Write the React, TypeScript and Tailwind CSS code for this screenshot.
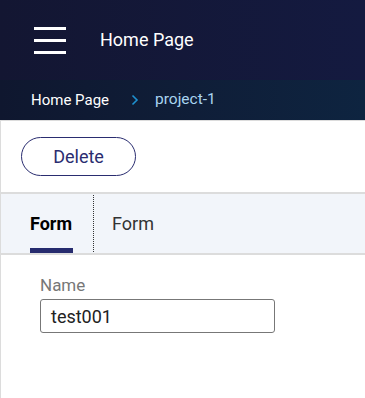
import React from "react";

export default function App() {
  return (
    <div className="w-[365px] h-[398px] overflow-hidden bg-white" style={{ fontFamily: "Roboto, 'Open Sans', Arial, sans-serif" }}>
      <header className="h-[80px] flex items-center bg-gradient-to-r from-[#131632] to-[#141a40]">
        <div className="ml-[34px] w-[32px] flex flex-col gap-[9px]">
          <span className="block h-[3px] bg-white" />
          <span className="block h-[3px] bg-white" />
          <span className="block h-[3px] bg-white" />
        </div>
        <span className="ml-[34px] text-white text-[18px] leading-none">Home Page</span>
      </header>
      <nav className="h-[40px] flex items-center bg-gradient-to-r from-[#0f172f] to-[#0e2440] pl-[31px] text-[15px]">
        <span className="text-white">Home Page</span>
        <svg className="ml-[22px]" width="8" height="12" viewBox="0 0 8 12" fill="none">
          <path d="M1.5 1.5 L6 6 L1.5 10.5" stroke="#1e90d0" strokeWidth="1.6" />
        </svg>
        <span className="ml-[16px] text-[#a9d4f0] text-[15.5px]">project-1</span>
      </nav>
      <div className="border-l border-[#dcdcdc]">
        <div className="h-[74px] border-t border-b-2 border-[#dcdcdc] flex items-center pl-[20px]">
          <button className="w-[115px] h-[39px] rounded-full border border-[#2a2d70] text-[#2a2d70] text-[18px] flex items-center justify-center">
            Delete
          </button>
        </div>
        <div className="h-[61px] bg-[#f2f5fa] border-b-2 border-[#dcdcdc] flex items-stretch">
          <div className="relative flex items-center pl-[29px] pr-[21px]">
            <span className="text-[18px] font-bold text-black">Form</span>
            <span className="absolute left-[29px] bottom-0 w-[43px] h-[5px] bg-[#262b6e]" />
          </div>
          <div className="border-l border-dotted border-[#333] my-[1px]" />
          <div className="flex items-center pl-[18px]">
            <span className="text-[18px] text-[#333]">Form</span>
          </div>
        </div>
        <div className="pl-[39px] pt-[19px] h-[143px]">
          <div className="text-[17px] text-[#777] leading-[22px]">Name</div>
          <div className="mt-[3px] w-[235px] h-[34px] border border-[#777] rounded-[3px] flex items-center pl-[10px] text-[18px] text-[#222]">
            test001
          </div>
        </div>
      </div>
    </div>
  );
}
